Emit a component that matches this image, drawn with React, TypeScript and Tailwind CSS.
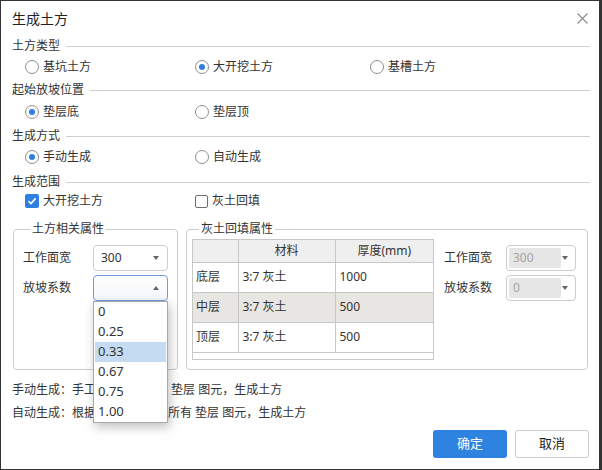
import { useState } from "react";

const FONT = "font-['Noto_Sans','Noto_Sans_CJK_SC',sans-serif]";

function SectionHeader({ title }: { title: string }) {
  return (
    <div className="flex items-center h-[20px] pl-[11px] pr-[9px]">
      <span className="leading-[16px]">{title}</span>
      <div className="flex-1 h-px bg-[#cfcfcf] ml-[6px]" />
    </div>
  );
}

function Radio({ label, checked }: { label: string; checked?: boolean }) {
  return (
    <div className="flex items-center gap-[4px]">
      <div className="w-[14px] h-[14px] rounded-full border border-[#8f8f8f] bg-white flex items-center justify-center">
        {checked && <div className="w-[6px] h-[6px] rounded-full bg-[#2e7fe0]" />}
      </div>
      <span className="leading-[16px]">{label}</span>
    </div>
  );
}

function Checkbox({ label, checked }: { label: string; checked?: boolean }) {
  return (
    <div className="flex items-center gap-[4px]">
      {checked ? (
        <div className="w-[14px] h-[14px] rounded-[2px] bg-[#2e7fe0] flex items-center justify-center">
          <svg width="10" height="10" viewBox="0 0 10 10">
            <path d="M1.5 5.2 L4 7.6 L8.6 2.4" fill="none" stroke="white" strokeWidth="1.6" />
          </svg>
        </div>
      ) : (
        <div className="w-[13px] h-[13px] rounded-[2px] border border-[#6f6f6f] bg-white" />
      )}
      <span className="leading-[16px]">{label}</span>
    </div>
  );
}

function Arrow({ up, color = "#666" }: { up?: boolean; color?: string }) {
  return (
    <svg width="6" height="4" viewBox="0 0 6 4">
      {up ? <path d="M0 4 L6 4 L3 0 Z" fill={color} /> : <path d="M0 0 L6 0 L3 4 Z" fill={color} />}
    </svg>
  );
}

function Select({
  value,
  width,
  open,
  disabled,
  children,
}: {
  value: string;
  width: string;
  open?: boolean;
  disabled?: boolean;
  children?: React.ReactNode;
}) {
  if (disabled) {
    return (
      <div className={`${width} h-[26px] rounded-[4px] border border-[#cccccc] bg-white flex items-center pl-[2px] pr-[7px]`}>
        <div className="w-[52px] h-[20px] rounded-[2px] bg-[#e6e6e6] flex items-center pl-[4px] text-[#a3a3a3]">
          {value}
        </div>
        <div className="flex-1" />
        <Arrow />
      </div>
    );
  }
  return (
    <div className="relative">
      <div
        className={`${width} h-[26px] rounded-[4px] border ${
          open ? "border-[#6f9ae0] bg-gradient-to-b from-white to-[#f4f6fa]" : "border-[#cccccc] bg-white"
        } flex items-center justify-between pl-[7px] pr-[8px]`}
      >
        <span className="leading-[16px]">{value}</span>
        <Arrow up={open} />
      </div>
      {children}
    </div>
  );
}

const OPTIONS = ["0", "0.25", "0.33", "0.67", "0.75", "1.00"];

function Dropdown() {
  const [hover] = useState("0.33");
  return (
    <div className="absolute left-0 top-full w-[75px] bg-white border border-[#a8a8a8] px-[1px] shadow-[2px_4px_10px_rgba(0,0,0,0.25)] z-10">
      {OPTIONS.map((o) => (
        <div
          key={o}
          className={`h-[20px] flex items-center pl-[3px] text-[13px] ${o === hover ? "bg-[#c5dbf1]" : ""}`}
        >
          {o}
        </div>
      ))}
    </div>
  );
}

const ROWS = [
  { layer: "底层", mat: "3:7 灰土", thick: "1000", grey: false },
  { layer: "中层", mat: "3:7 灰土", thick: "500", grey: true },
  { layer: "顶层", mat: "3:7 灰土", thick: "500", grey: false },
];

export default function App() {
  return (
    <div className={`${FONT} w-[602px] h-[470px] bg-white border border-[#333] border-r-[3px] text-[12px] text-[#333] overflow-hidden`}>
      {/* Title */}
      <div className="h-[35px] flex items-center justify-between pl-[11px] pr-[11px]">
        <span className="text-[14px] leading-[18px] text-[#222]">生成土方</span>
        <svg width="11" height="11" viewBox="0 0 11 11">
          <path d="M0.5 0.5 L10.5 10.5 M10.5 0.5 L0.5 10.5" stroke="#8a8a8a" strokeWidth="1.1" />
        </svg>
      </div>

      <SectionHeader title="土方类型" />
      <div className="h-[21px] flex items-center pl-[24px]">
        <div className="w-[170px]"><Radio label="基坑土方" /></div>
        <div className="w-[175px]"><Radio label="大开挖土方" checked /></div>
        <Radio label="基槽土方" />
      </div>

      <div className="mt-[3px]"><SectionHeader title="起始放坡位置" /></div>
      <div className="h-[24px] flex items-center pl-[24px]">
        <div className="w-[170px]"><Radio label="垫层底" checked /></div>
        <Radio label="垫层顶" />
      </div>

      <div className="mt-[2px]"><SectionHeader title="生成方式" /></div>
      <div className="h-[22px] flex items-center pl-[24px]">
        <div className="w-[170px]"><Radio label="手动生成" checked /></div>
        <Radio label="自动生成" />
      </div>

      <div className="mt-[4px]"><SectionHeader title="生成范围" /></div>
      <div className="h-[18px] flex items-center pl-[24px]">
        <div className="w-[170px]"><Checkbox label="大开挖土方" checked /></div>
        <Checkbox label="灰土回填" />
      </div>

      {/* Property groups */}
      <div className="mt-[11px] flex gap-[8px] pl-[12px]">
        <fieldset className="w-[165px] h-[149px] border border-[#cccccc] rounded-[4px] pl-[9px] pt-[8px]">
          <legend className="ml-[7px] px-[2px] leading-[16px]">土方相关属性</legend>
          <div className="flex flex-col gap-[4px]">
            <div className="flex items-center">
              <span className="w-[70px]">工作面宽</span>
              <Select value="300" width="w-[75px]" />
            </div>
            <div className="flex items-center">
              <span className="w-[70px]">放坡系数</span>
              <Select value="" width="w-[75px]" open>
                <Dropdown />
              </Select>
            </div>
          </div>
        </fieldset>

        <fieldset className="w-[402px] h-[149px] border border-[#cccccc] rounded-[4px] pl-[5px] pt-[2px]">
          <legend className="ml-[7px] px-[2px] leading-[16px]">灰土回填属性</legend>
          <div className="flex">
            <div className="w-[242px] h-[121px] border border-[#c8c8c8]">
              <table className="w-full border-collapse">
                <thead>
                  <tr className="h-[22px] bg-[#efefef]">
                    <th className="w-[45px] border-r border-b border-[#c8c8c8] font-normal" />
                    <th className="w-[97px] border-r border-b border-[#c8c8c8] font-normal">材料</th>
                    <th className="border-b border-[#c8c8c8] font-normal">厚度(mm)</th>
                  </tr>
                </thead>
                <tbody>
                  {ROWS.map((r) => (
                    <tr key={r.layer} className={`h-[30px] ${r.grey ? "bg-[#e8e6e3]" : "bg-white"}`}>
                      <td className="border-r border-b border-[#c8c8c8] pl-[3px]">{r.layer}</td>
                      <td className="border-r border-b border-[#c8c8c8] pl-[4px]">{r.mat}</td>
                      <td className="border-b border-[#c8c8c8] pl-[4px]">{r.thick}</td>
                    </tr>
                  ))}
                </tbody>
              </table>
            </div>
            <div className="ml-[10px] pt-[6px] flex flex-col gap-[4px]">
              <div className="flex items-center">
                <span className="w-[62px]">工作面宽</span>
                <Select value="300" width="w-[70px]" disabled />
              </div>
              <div className="flex items-center">
                <span className="w-[62px]">放坡系数</span>
                <Select value="0" width="w-[70px]" disabled />
              </div>
            </div>
          </div>
        </fieldset>
      </div>

      {/* Notes */}
      <div className="pl-[11px] mt-[12px] leading-[16px]">手动生成：手工选择楼层中的 垫层 图元，生成土方</div>
      <div className="pl-[11px] mt-[7px] leading-[16px]">自动生成：根据当前楼层中的所有 垫层 图元，生成土方</div>

      {/* Buttons */}
      <div className="mt-[9px] flex justify-end gap-[8px] pr-[10px]">
        <button className="w-[74px] h-[28px] rounded-[3px] bg-[#2e82e0] text-white text-[13px]">确定</button>
        <button className="w-[74px] h-[28px] rounded-[3px] border border-[#cccccc] bg-white text-[13px] text-[#222]">取消</button>
      </div>
    </div>
  );
}
